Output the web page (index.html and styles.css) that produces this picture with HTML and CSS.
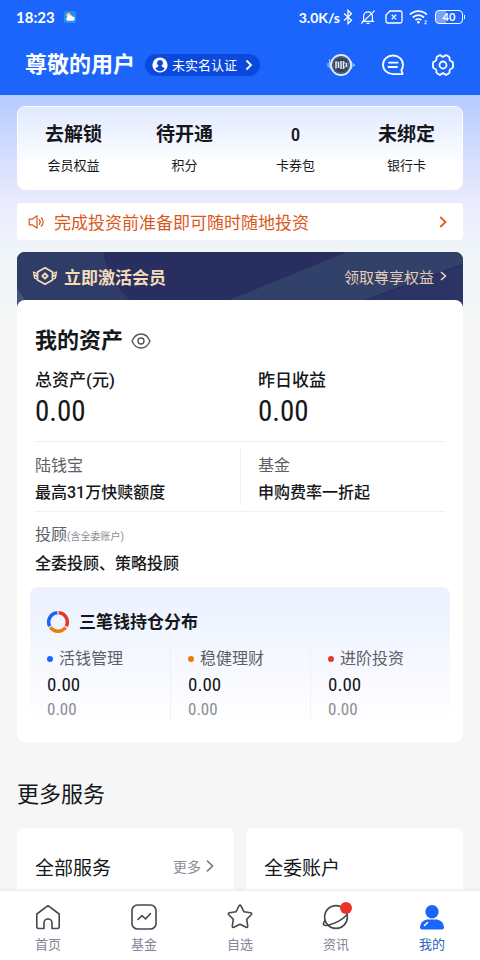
FILE: index.html
```html
<!DOCTYPE html>
<html lang="zh-CN">
<head>
<meta charset="utf-8">
<meta name="viewport" content="width=device-width, initial-scale=1">
<title>我的</title>
<link rel="stylesheet" href="styles.css">
</head>
<body>
<div class="app">
  <header class="top">
    <div class="status">
      <span class="clock">18:23</span>
      <svg class="weather" width="12" height="12" viewBox="0 0 12 12"><rect width="12" height="12" rx="2" fill="#2f8cf0"/><circle cx="4.6" cy="4.2" r="2.2" fill="#ffd48a"/><path d="M3.8 9.800a1.900 1.900 0 0 1 0-3.700 2.500 2.500 0 0 1 4.600-.6 2.200 2.200 0 0 1 .8 4.300z" fill="#fff"/></svg>
      <span class="speed">3.0K/s</span>
      <svg class="bt" width="10" height="16" viewBox="0 0 10 16" fill="none" stroke="#fff" stroke-width="1.3"><path d="M1 4.5l7.5 6.7L5 14.6V1.4l3.5 3.4L1 11.5"/></svg>
      <svg class="bell" width="16" height="16" viewBox="0 0 16 16" fill="none" stroke="#fff" stroke-width="1.2"><path d="M3.6 12V7.2a4.4 4.4 0 0 1 8.8 0V12M1.8 12.3h12.4M6.5 14.4h3M1.2 14.6L14.6 1.6"/></svg>
      <svg class="sim" width="18" height="14" viewBox="0 0 18 14" fill="none" stroke="#fff" stroke-width="1.3"><path d="M5 1h10.2a1.8 1.8 0 0 1 1.8 1.8v8.4a1.8 1.8 0 0 1-1.8 1.8H2.8A1.8 1.8 0 0 1 1 11.200V5zM6.800 4.800l4.400 4.400M11.200 4.800L6.800 9.200"/></svg>
      <svg class="wifi" width="20" height="16" viewBox="0 0 20 16" fill="none" stroke="#fff" stroke-width="1.8"><path d="M1 5.600a12 12 0 0 1 16.800 0M3.800 8.500a8 8 0 0 1 11.200 0M6.500 11.200a4.200 4.200 0 0 1 5.800 0"/><circle cx="9.400" cy="13.200" r="1.300" fill="#fff" stroke="none"/><path d="M15.500 12h2.500l-2.500 2.800H18" stroke-width=".8"/></svg>
      <span class="battery">40</span>
    </div>
    <div class="user">
      <h1>尊敬的用户</h1>
      <button class="verify" type="button">
        <svg width="16" height="16" viewBox="0 0 16 16"><circle cx="8" cy="8" r="7.600" fill="#fff"/><path d="M8 3a3.100 3.100 0 0 0-1.500 5.800c-.1 1.300-2.700 1.400-3.200 3A6.700 6.700 0 0 0 8 14.200a6.700 6.700 0 0 0 4.700-2.400c-.5-1.600-3.100-1.700-3.200-3A3.100 3.100 0 0 0 8 3z" fill="#0b49dd"/></svg>
        <span>未实名认证</span>
        <svg width="8" height="12" viewBox="0 0 8 12" fill="none" stroke="#fff" stroke-width="1.800"><path d="M1.500 1.500L6 6l-4.500 4.500"/></svg>
      </button>
      <div class="tools">
        <button type="button" aria-label="语音助手"><svg width="28" height="24" viewBox="0 0 28 24"><path d="M1 10v4M2.500 6v9M3.600 9v7M24.500 8v8M26 10v4M27.300 11v2" stroke="#8fbaff" stroke-width="1.200"/><circle cx="14" cy="12" r="10" fill="#34435f" stroke="#dfe8fb" stroke-width="1.800"/><circle cx="14" cy="12" r="8" fill="none" stroke="#60728f" stroke-width=".8"/><path d="M9 8.500v7M11.500 9v6M14 8v8M16.500 8v8M19.500 10v4" stroke="#e7efff" stroke-width="1.500"/><path d="M9 9h2.500M16.500 9l3 2M16.500 15l3-2" stroke="#b9cbea"/></svg></button>
        <button type="button" aria-label="消息"><svg width="24" height="24" viewBox="0 0 24 24" fill="none" stroke="#fff" stroke-width="1.800" stroke-linecap="round" stroke-linejoin="round"><path d="M12 2.500c5.600 0 10 4 10 9.300 0 2.400-.6 4-1.600 5.400l1.200 3.900h-9.600c-5.600 0-10-4-10-9.300s4.400-9.300 10-9.300zM8 9.700h8.500M7.500 14H16"/></svg></button>
        <button type="button" aria-label="设置"><svg width="24" height="24" viewBox="0 0 24 24" fill="none" stroke="#fff" stroke-width="1.800" stroke-linejoin="round"><path d="M8.200 2.400Q9.500 1.700 10.300 3Q12 4.500 13.700 3Q14.500 1.700 15.800 2.400L18 3.700Q19 4.500 18.500 6Q18.500 8 20.500 8.500Q22 8.800 22 10V14Q22 15.200 20.500 15.500Q18.500 16 18.500 18Q19 19.500 18 20.300L15.800 21.600Q14.500 22.300 13.700 21Q12 19.500 10.300 21Q9.500 22.300 8.200 21.600L6 20.300Q5 19.500 5.500 18Q5.500 16 3.500 15.500Q2 15.200 2 14V10Q2 8.800 3.500 8.500Q5.500 8 5.500 6Q5 4.500 6 3.700Z"/><circle cx="12" cy="12" r="3.500"/></svg></button>
      </div>
    </div>
  </header>

  <main class="content">
    <ul class="stats">
      <li><strong>去解锁</strong><span>会员权益</span></li>
      <li><strong>待开通</strong><span>积分</span></li>
      <li><strong class="num">0</strong><span>卡券包</span></li>
      <li><strong>未绑定</strong><span>银行卡</span></li>
    </ul>

    <a class="notice" href="#prepare">
      <svg width="18" height="16" viewBox="0 0 18 16" fill="none" stroke="#d9581c" stroke-width="1.200" stroke-linejoin="round" stroke-linecap="round"><path d="M1.200 5.200h3L9 1.800v12.400l-4.800-3.400h-3zM11.200 5.700a3.300 3.300 0 0 1 0 4.600M13.300 3.800a5.800 5.800 0 0 1 0 8.400"/></svg>
      <span>完成投资前准备即可随时随地投资</span>
      <svg class="go" width="8" height="12" viewBox="0 0 8 12" fill="none" stroke="#e05a1e" stroke-width="1.800"><path d="M1.300 1L6.500 6l-5.200 5"/></svg>
    </a>

    <section class="member">
      <a class="banner" href="#member">
        <svg class="shade" viewBox="0 0 446 60" preserveAspectRatio="none"><path d="M0 0H86Q92 34 124 60H0z" fill="#303c68"/><path d="M0 38l16 22H0z" fill="#46517c"/><path d="M188 60L330 0h116v12L320 60z" fill="#31416a"/><path d="M325 60L446 14v46z" fill="#2b3565"/></svg>
        <svg class="badge" width="26" height="20" viewBox="0 0 26 20" fill="none" stroke="#f5dcb8" stroke-width="1.800" stroke-linejoin="round"><path d="M13 1.800l7.500 4.200v8L13 18.200 5.500 14V6z"/><path d="M13 7.300l2.700 2.700-2.700 2.700-2.700-2.700z"/><path d="M5 7.500L1.500 6 2 8.500l3 1.200M5 10.500L2 9.500l.8 2.800L5 13M21 7.500L24.500 6 24 8.500l-3 1.200M21 10.500l3-1-.8 2.800L21 13" stroke-width="1.300"/></svg>
        <b>立即激活会员</b>
        <span>领取尊享权益</span>
        <svg class="chev" width="7" height="10" viewBox="0 0 7 10" fill="none" stroke="#f1ddc4" stroke-width="1.500"><path d="M1 1l4.500 4L1 9"/></svg>
      </a>
      <div class="assets">
        <h2>我的资产
          <button type="button" aria-label="隐藏金额"><svg width="20" height="16" viewBox="0 0 20 16" fill="none" stroke="#55585e" stroke-width="1.400"><path d="M1 8C3 3.300 6 1 10 1s7 2.300 9 7c-2 4.700-5 7-9 7s-7-2.300-9-7z"/><circle cx="10" cy="8" r="3"/></svg></button>
        </h2>
        <div class="pair totals">
          <div><h3>总资产(元)</h3><p class="num">0.00</p></div>
          <div><h3>昨日收益</h3><p class="num">0.00</p></div>
        </div>
        <div class="pair products">
          <div><h4>陆钱宝</h4><p>最高31万快赎额度</p></div>
          <div><h4>基金</h4><p>申购费率一折起</p></div>
        </div>
        <div class="advisor">
          <h4>投顾<small>(含全委账户)</small></h4><p>全委投顾、策略投顾</p>
        </div>
        <section class="spread">
          <h3><svg width="24" height="24" viewBox="0 0 24 24" fill="none" stroke-width="3.500"><path d="M12.600 2.700A9.300 9.300 0 0 1 20.300 16.200" stroke="#e2382c"/><path d="M19.600 17.300A9.300 9.300 0 0 1 4.400 17.300" stroke="#ee7a0c"/><path d="M3.700 16.200A9.300 9.300 0 0 1 11.400 2.700" stroke="#1e63f5"/></svg>三笔钱持仓分布</h3>
          <ul>
            <li class="blue"><h4>活钱管理</h4><p class="num">0.00</p><p class="num sub">0.00</p></li>
            <li class="orange"><h4>稳健理财</h4><p class="num">0.00</p><p class="num sub">0.00</p></li>
            <li class="red"><h4>进阶投资</h4><p class="num">0.00</p><p class="num sub">0.00</p></li>
          </ul>
        </section>
      </div>
    </section>

    <section class="more">
      <h2>更多服务</h2>
      <div class="cards">
        <a href="#services"><h3>全部服务</h3><span>更多</span><svg width="8" height="12" viewBox="0 0 8 12" fill="none" stroke="#777b80" stroke-width="1.600"><path d="M1 .7L6.500 6 1 11.300"/></svg></a>
        <a href="#account"><h3>全委账户</h3></a>
      </div>
    </section>
  </main>

  <nav class="tabs">
    <a href="#home"><svg width="28" height="28" viewBox="0 0 28 28"><path d="M14 2.700L2.800 11v12.500a2 2 0 0 0 2 2H10V20a4 4 0 0 1 8 0v5.500h5.200a2 2 0 0 0 2-2V11z"/></svg>首页</a>
    <a href="#fund"><svg width="28" height="28" viewBox="0 0 28 28"><rect x="2" y="2" width="24" height="24" rx="5.500"/><path d="M8 16.500l4-4 3.500 3.500 5-5.500"/></svg>基金</a>
    <a href="#watch"><svg width="28" height="28" viewBox="0 0 28 28"><path d="M13 2.800q1-1.600 2 0l3 6 6.500 1q2 .4.700 1.900l-4.500 4.600 1 6.600q.2 2-1.600 1.300L14 21.200l-6.100 3q-1.800.7-1.600-1.300l1-6.600-4.500-4.600q-1.300-1.500.7-1.900l6.500-1z"/></svg>自选</a>
    <a href="#news"><svg width="28" height="28" viewBox="0 0 28 28"><circle cx="14" cy="14" r="11.400"/><path d="M3 17.500c-3 4-1.500 5.800 3 4.700C12 20.800 20 17 25.200 11.500"/></svg><i class="dot"></i>资讯</a>
    <a class="on" href="#me" aria-current="page"><svg width="28" height="28" viewBox="0 0 28 28"><circle cx="14" cy="8.800" r="6.700"/><path d="M2 24.500C2.500 18.500 7 16.500 10 16.500h8c3 0 7.500 2 8 8q0 2-2 2H4q-2 0-2-2z"/><path class="shine" d="M6.500 22.500l3-3"/></svg>我的</a>
  </nav>
</div>
</body>
</html>
```
FILE: styles.css
```css
* { box-sizing: border-box; }
body, h1, h2, h3, h4, p, ul { margin: 0; padding: 0; }
ul { list-style: none; }
a { color: inherit; text-decoration: none; }
svg { display: block; flex: none; }
button {
  border: 0;
  padding: 0;
  background: none;
  color: inherit;
  font: inherit;
}
body {
  font-family: Roboto, "Noto Sans CJK SC", sans-serif;
  color: #15171a;
  background: #f6f6f6;
}
.num {
  font-family: "Roboto Condensed", Roboto, sans-serif;
  font-weight: 400;
}
.app {
  display: flex;
  flex-direction: column;
  height: 100vh;
}

/* header */
.top {
  flex: none;
  padding-bottom: 10px;
  background: #1b65fd;
  color: #fff;
}
.status {
  display: flex;
  align-items: center;
  height: 34px;
  padding: 0 15px 0 16px;
  font-family: Lato, sans-serif;
  font-size: 14px;
  font-weight: 700;
}
.clock { font-size: 15px; }
.weather { margin-left: 9px; }
.speed { margin-left: auto; }
.bt { margin-left: 3px; }
.bell { margin-left: 7px; }
.sim { margin-left: 9px; }
.wifi { margin-left: 6px; }
.battery {
  position: relative;
  width: 28px;
  height: 14px;
  margin-left: 6px;
  margin-right: 2px;
  border: 1px solid #fff;
  border-radius: 4px;
  background: linear-gradient(90deg, #76a2fc 40%, transparent 40%);
  font-size: 11px;
  line-height: 12px;
  text-align: center;
}
.battery::after {
  content: "";
  position: absolute;
  top: 4px;
  right: -3px;
  width: 1px;
  height: 4px;
  background: #fff;
}
.user {
  display: flex;
  align-items: center;
  height: 51px;
  padding: 14px 25px 4px;
}
h1 {
  font-size: 22px;
  line-height: 30px;
  white-space: nowrap;
}
.verify {
  display: flex;
  align-items: center;
  height: 22px;
  margin-left: 10px;
  padding: 0 7px;
  border-radius: 11px;
  background: #0b49dd;
  font-size: 13px;
  white-space: nowrap;
}
.verify span { margin: 0 8px 0 4px; }
.tools {
  display: flex;
  align-items: center;
  gap: 26px;
  margin-left: auto;
}

/* scrolling page */
.content {
  flex: 1;
  min-height: 0;
  overflow-y: auto;
  scrollbar-width: none;
  padding: 11px 17px;
  background: linear-gradient(#b4ccff, #d3deff 60px, #ebebfc 110px, #eff5f8 155px, #f6f6f6 240px);
}
.stats {
  display: grid;
  grid-template-columns: repeat(4, 1fr);
  height: 84px;
  padding-top: 14px;
  border: 1px solid #fff;
  border-radius: 8px;
  background: linear-gradient(#e0e9ff, #fff 70%);
  text-align: center;
}
.stats strong {
  display: block;
  font-size: 19px;
  font-weight: 700;
  line-height: 28px;
}
.stats span {
  display: block;
  margin-top: 7px;
  font-size: 13px;
  line-height: 20px;
}
.stats .num { font-weight: 500; }
.notice {
  display: flex;
  align-items: center;
  height: 37px;
  margin-top: 13px;
  padding: 0 16px 0 11px;
  border-radius: 4px;
  background: #fff;
  color: #d9581c;
  font-size: 17px;
  white-space: nowrap;
}
.notice span { margin-left: 8px; }
.go { margin-left: auto; }

.member {
  margin-top: 12px;
  border-radius: 8px;
  overflow: hidden;
  background: #fff;
}
.banner {
  position: relative;
  display: flex;
  align-items: center;
  height: 58px;
  padding: 0 16px 10px 15px;
  background: #282f60;
  color: #f5dcb8;
  font-size: 17px;
}
.shade {
  position: absolute;
  inset: 0;
  width: 100%;
  height: 100%;
}
.banner > :not(.shade) { position: relative; }
.banner b { margin-left: 6px; }
.banner span {
  margin-left: auto;
  font-size: 15px;
  color: #e6cdb7;
}
.chev { margin-left: 6px; }
.assets {
  position: relative;
  margin-top: -10px;
  padding: 26px 13px 17px;
  border-radius: 8px;
  background: #fff;
}
.assets > :not(.spread) { margin-left: 5px; margin-right: 5px; }
.assets h2 {
  display: flex;
  align-items: center;
  gap: 8px;
  font-size: 22px;
  font-weight: 700;
  line-height: 30px;
}
.pair {
  display: grid;
  grid-template-columns: 1fr 1fr;
}
.pair > div + div { padding-left: 18px; }
.totals {
  margin-top: 12px;
  padding-bottom: 14px;
}
.totals h3 {
  font-size: 17px;
  font-weight: 500;
  line-height: 24px;
}
.totals p {
  margin-top: 3px;
  font-size: 29px;
  line-height: 32px;
}
.products {
  padding: 7px 0 6px;
  border: solid #f1f1f3;
  border-width: 1px 0;
}
.products > div { padding-top: 5px; }
.products > div + div { padding-left: 17px; border-left: 1px solid #f1f1f3; }
.assets h4 {
  font-size: 16px;
  font-weight: 400;
  line-height: 24px;
  color: #5c6066;
}
.products p, .advisor p {
  margin-top: 3px;
  font-size: 16px;
  font-weight: 500;
  line-height: 24px;
}
.advisor { padding: 11px 0; }
small {
  font-size: 10px;
  color: #8a8e94;
}
.spread {
  padding: 21px 0 6px;
  border-radius: 8px;
  background: linear-gradient(#edf1ff, #eff5ff 30%, #f8f9ff 60%, #fff);
}
.spread h3 {
  display: flex;
  align-items: center;
  gap: 9px;
  padding-left: 16px;
  font-size: 17px;
  font-weight: 700;
  line-height: 28px;
}
.spread ul {
  display: grid;
  grid-template-columns: repeat(3, 1fr);
  margin-top: 11px;
}
.spread li { padding-left: 17px; }
.spread li + li { border-left: 1px solid #f0f1f5; }
.spread h4 {
  display: flex;
  align-items: center;
  gap: 6px;
}
.spread h4::before {
  content: "";
  width: 6px;
  height: 6px;
  border-radius: 50%;
  background: #1b65fd;
}
.spread .orange h4::before { background: #ee7a0c; }
.spread .red h4::before { background: #e2382c; }
.spread p {
  margin-top: 2px;
  font-size: 19px;
  line-height: 24px;
}
.spread .sub {
  font-size: 17px;
  line-height: 20px;
  color: #8a8e94;
}

.more h2 {
  margin: 37px 0 17px;
  font-size: 22px;
  font-weight: 400;
  line-height: 32px;
}
.cards {
  display: grid;
  grid-template-columns: 1fr 1fr;
  gap: 12px;
}
.cards a {
  display: flex;
  align-items: center;
  height: 76px;
  padding: 0 20px 0 18px;
  border-radius: 6px;
  background: #fff;
  font-size: 14px;
  color: #8a8e94;
}
.cards h3 {
  margin-right: auto;
  font-size: 19px;
  font-weight: 400;
  color: #15171a;
}
.cards svg { margin-left: 5px; }

/* bottom tabs */
.tabs {
  flex: none;
  display: grid;
  grid-template-columns: repeat(5, 1fr);
  height: 70px;
  border-top: 1px solid #e9eeef;
  background: #fff;
  box-shadow: 0 -1px 3px #0000000d;
  position: relative;
}
.tabs a {
  position: relative;
  display: flex;
  flex-direction: column;
  align-items: center;
  padding-top: 12px;
  font-size: 13px;
  line-height: 20px;
  color: #7c8796;
}
.tabs svg {
  margin-bottom: 4px;
  fill: none;
  stroke: #44474c;
  stroke-width: 1.6;
  stroke-linejoin: round;
  stroke-linecap: round;
}
.tabs .on { color: #2c65ba; }
.tabs .on svg { fill: #1b65fd; stroke: none; }
.tabs .shine { stroke: #fff; }
.dot {
  position: absolute;
  top: 11px;
  left: calc(50% + 4px);
  width: 12px;
  height: 12px;
  border-radius: 50%;
  background: #ea3323;
}
```
